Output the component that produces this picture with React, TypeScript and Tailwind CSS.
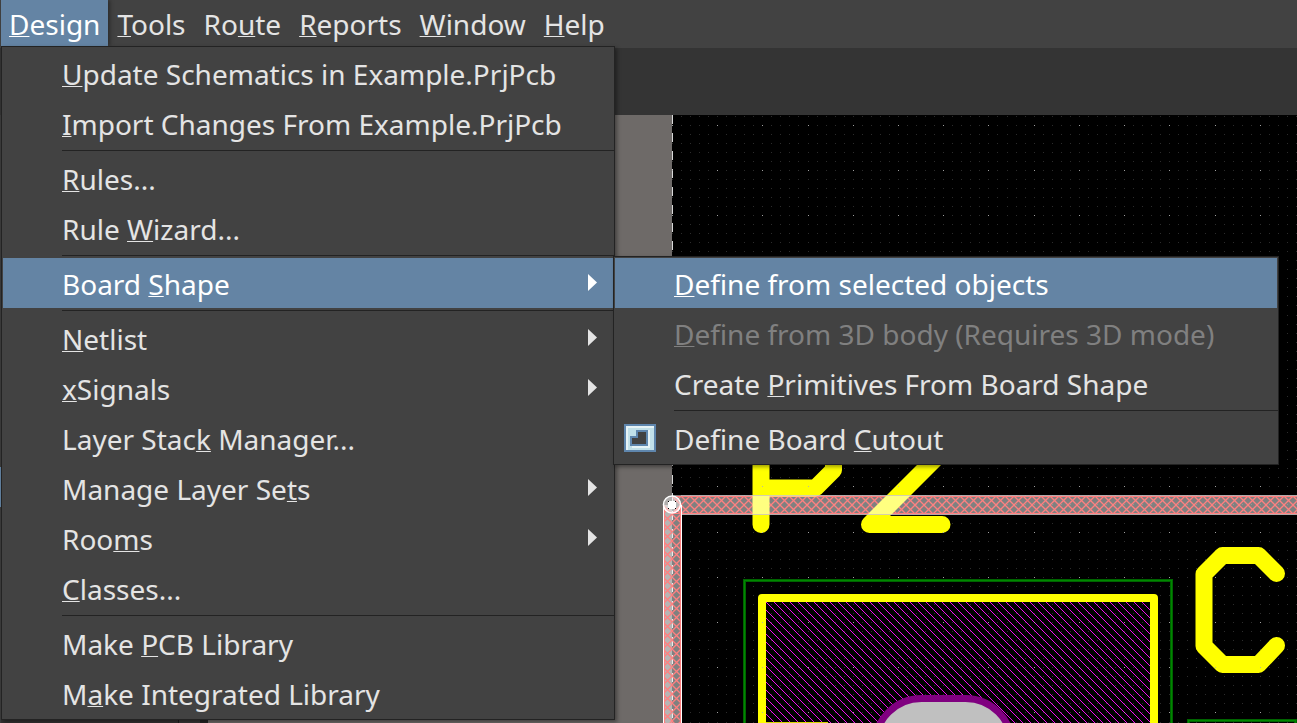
import React from 'react';

type Entry = {
  label: string;
  hot?: number;
  active?: boolean;
  disabled?: boolean;
  arrow?: boolean;
  icon?: React.ReactNode;
  submenu?: Group[];
};
type Group = Entry[];

function CutoutIcon() {
  return (
    <svg width="32" height="28" viewBox="0 0 32 28" shapeRendering="crispEdges" aria-hidden="true">
      <rect width="32" height="28" fill="#5f86ad" />
      <rect x="2" y="2" width="28" height="24" fill="#e6f3f6" />
      <path d="M4 4H30V26H4Z" fill="#c1e0e9" />
      <path d="M24 6H26V24H8V22H24Z" fill="#e6f3f6" />
      <path d="M12 6H24V22H6V12H12Z" fill="#5f86ad" />
      <path d="M14 8H22V20H8V14H14Z" fill="#424242" />
    </svg>
  );
}

const boardShape: Group[] = [
  [
    { label: 'Define from selected objects', hot: 0, active: true },
    { label: 'Define from 3D body (Requires 3D mode)', hot: 0, disabled: true },
    { label: 'Create Primitives From Board Shape', hot: 7 },
  ],
  [{ label: 'Define Board Cutout', hot: 13, icon: <CutoutIcon /> }],
];

const design: Group[] = [
  [
    { label: 'Update Schematics in Example.PrjPcb', hot: 0 },
    { label: 'Import Changes From Example.PrjPcb', hot: 0 },
  ],
  [
    { label: 'Rules...', hot: 0 },
    { label: 'Rule Wizard...', hot: 5 },
  ],
  [{ label: 'Board Shape', hot: 6, active: true, arrow: true, submenu: boardShape }],
  [
    { label: 'Netlist', hot: 0, arrow: true },
    { label: 'xSignals', hot: 0, arrow: true },
    { label: 'Layer Stack Manager...', hot: 10 },
    { label: 'Manage Layer Sets', hot: 15, arrow: true },
    { label: 'Rooms', hot: 3, arrow: true },
    { label: 'Classes...', hot: 0 },
  ],
  [
    { label: 'Make PCB Library', hot: 5 },
    { label: 'Make Integrated Library', hot: 1 },
  ],
];

function Mnemonic({ label, hot = 0 }: { label: string; hot?: number }) {
  return (
    <span className="whitespace-pre">
      {label.slice(0, hot)}
      <span className="underline decoration-1 underline-offset-1 [text-decoration-skip-ink:none]">{label[hot]}</span>
      {label.slice(hot + 1)}
    </span>
  );
}

function MenuItem({ entry }: { entry: Entry }) {
  const tone = entry.active
    ? 'bg-[#6484a4] text-white'
    : entry.disabled
      ? 'text-[#808080]'
      : 'text-[#e4e4e4]';
  return (
    <li className="relative" role="none">
      <button
        type="button"
        role="menuitem"
        disabled={entry.disabled}
        className={`flex h-[50px] w-full items-center pr-4 text-left ${tone}`}
      >
        <span className="flex w-[59px] shrink-0 pl-[9px]">{entry.icon}</span>
        <span className="flex-1 pt-0.5">
          <Mnemonic label={entry.label} hot={entry.hot} />
        </span>
        {entry.arrow && (
          <svg width="9" height="18" viewBox="0 0 9 18" fill="currentColor" aria-hidden="true">
            <path d="M0 0L9 8.5L0 17Z" />
          </svg>
        )}
      </button>
      {entry.submenu && (
        <Menu groups={entry.submenu} label={entry.label} place="left-full -top-0.5 w-[666px]" />
      )}
    </li>
  );
}

function Menu({ groups, label, place }: { groups: Group[]; label: string; place: string }) {
  return (
    <ul
      role="menu"
      aria-label={label}
      className={`absolute z-10 border border-[#232323] bg-[#424242] p-px shadow-[2px_2px_4px_rgba(0,0,0,0.4)] ${place}`}
    >
      {groups.map((group, g) => (
        <React.Fragment key={g}>
          {g > 0 && (
            <li role="separator" className="-mr-px ml-[59px] h-[5px] pt-0.5">
              <div className="h-px bg-[#232323]" />
            </li>
          )}
          {group.map((entry) => (
            <MenuItem key={entry.label} entry={entry} />
          ))}
        </React.Fragment>
      ))}
    </ul>
  );
}

const bar = [
  { label: 'Tools', hot: 0 },
  { label: 'Route', hot: 2 },
  { label: 'Reports', hot: 0 },
  { label: 'Window', hot: 0 },
  { label: 'Help', hot: 0 },
];

function gridPath(major: boolean) {
  const step = 9.044;
  let d = '';
  for (let i = 0; i < 70; i++) {
    for (let j = -1; j < 67; j++) {
      if ((i % 5 === 0 && j % 5 === 0) !== major) continue;
      const x = Math.floor(672.38 + i * step);
      const y = Math.floor(125.1 + j * step);
      d += `M${x} ${y}h1v1h-1z`;
    }
  }
  return d;
}

const minorDots = gridPath(false);
const majorDots = gridPath(true);

function BoardView() {
  return (
    <svg className="block min-w-0 flex-1 bg-[#6e6a68]" role="img" aria-label="PCB layout">
      <defs>
        <pattern id="cross" width="9" height="9" patternUnits="userSpaceOnUse" x="672" y="496">
          <path d="M-1 -1L10 10M10 -1L-1 10" stroke="#ff0000" strokeWidth="1.3" />
        </pattern>
        <pattern id="hatch" width="8" height="8" patternUnits="userSpaceOnUse" x="766" y="602">
          <path
            d="M0 0h1v1h-1zM1 1h1v1h-1zM2 2h1v1h-1zM3 3h1v1h-1zM4 4h1v1h-1zM5 5h1v1h-1zM6 6h1v1h-1zM7 7h1v1h-1z"
            fill="#ee10ee"
            shapeRendering="crispEdges"
          />
        </pattern>
      </defs>
      <g transform="translate(-208 -115)">
        <rect x="672" y="115" width="1600" height="1200" fill="#000" />
        <g shapeRendering="crispEdges">
          <path d={minorDots} fill="#2c2c2c" />
          <path d="M672.5 115V1315" stroke="#d8d8d8" strokeDasharray="9 9" />
        </g>

        <rect x="672" y="496" width="1600" height="18" fill="url(#cross)" />
        <rect x="664" y="505" width="17" height="800" fill="url(#cross)" />
        <path d="M672 496.5H2272M672 513.5H2272M664.5 505V1305M680.5 505V1305" stroke="#ff0000" />

        <g fill="none" stroke="#ffff00" strokeWidth="17" strokeLinecap="round" strokeLinejoin="round">
          <path d="M761 420V524.5M761 488H815.5L833.5 470V440" />
          <path d="M942 524.5H869.5L935 459" />
          <path d="M1276.5 573.5L1258.5 555.5H1222.5L1204 574V646L1222.5 664.5H1258.5L1276.5 645.5" />
        </g>

        <path d="M682 495H2272V515H682Z" fill="#fff" fillOpacity="0.5" />
        <path d="M663 505H672V495H682V1305H663Z" fill="#fff" fillOpacity="0.5" />
        <path d="M681 495.5H2272M682 514.5H2272" stroke="#c4bcbc" strokeOpacity="0.7" />
        <path d="M663.5 505V1305M681.5 505V1305" stroke="#fff" />
        <circle cx="672" cy="504.5" r="8.5" fill="#fff" fillOpacity="0.45" stroke="#fff" strokeWidth="1.5" />
        <rect x="668" y="501" width="8" height="8" fill="#000" shapeRendering="crispEdges" />
        <path d="M669 501H675V502H676V508H675V509H669V508H668V502H669Z" fill="#fff" shapeRendering="crispEdges" />

        <g shapeRendering="crispEdges" fill="none">
          <path d="M744.5 1305V580.5H1171.5V1305M1188.5 1305V720.5H1295.5V1305" stroke="#006400" strokeWidth="3" />
          <path d="M744.5 1305V580.5H1171.5V1305M1188.5 1305V720.5H1295.5V1305" stroke="#008800" />
          <rect x="766" y="602" width="384" height="700" fill="url(#hatch)" />
        </g>
        <path d="M762 1305V598H1154V1305" fill="none" stroke="#ffff00" strokeWidth="8" strokeLinejoin="round" />
        <rect x="766" y="722" width="62" height="8" fill="#d8d800" />
        <path d={majorDots} fill="#b0b0b0" fillOpacity="0.9" shapeRendering="crispEdges" />
        <rect x="875" y="698.5" width="137" height="160" rx="46.5" fill="#c0c0c0" stroke="#800080" strokeWidth="7" />
      </g>
    </svg>
  );
}

export default function App() {
  return (
    <div className="flex h-screen flex-col overflow-hidden bg-[#343434] font-['Noto_Sans','Open_Sans',sans-serif] text-[28px] leading-[38px]">
      <nav className="h-12 shrink-0 bg-[#424242] pl-px" aria-label="Main menu">
        <ul className="flex h-[46px] text-[#e4e4e4]">
          <li className="relative">
            <button
              type="button"
              aria-expanded="true"
              className="flex h-full items-center bg-[#6484a4] px-2 pt-0.5 text-white shadow-[2px_0_4px_rgba(0,0,0,0.35)]"
            >
              <Mnemonic label="Design" />
            </button>
            <Menu groups={design} label="Design" place="left-0 top-full w-[614px]" />
          </li>
          {bar.map((entry) => (
            <li key={entry.label}>
              <button type="button" className="flex h-full items-center px-[9px] pt-0.5">
                <Mnemonic label={entry.label} hot={entry.hot} />
              </button>
            </li>
          ))}
        </ul>
      </nav>
      <div className="h-[67px] shrink-0" />
      <main className="flex min-h-0 flex-1">
        <aside className="flex w-[208px] shrink-0 bg-[#343232]">
          <div className="w-px bg-[#3c3c3c] pt-[352px]">
            <div className="h-10 bg-[#6484a4]" />
          </div>
          <div className="flex-1 border-r border-[#1c1c1c]" />
          <div className="w-[29px] border-r-8 border-[#262424] bg-[#3a3838]" />
        </aside>
        <BoardView />
      </main>
    </div>
  );
}
